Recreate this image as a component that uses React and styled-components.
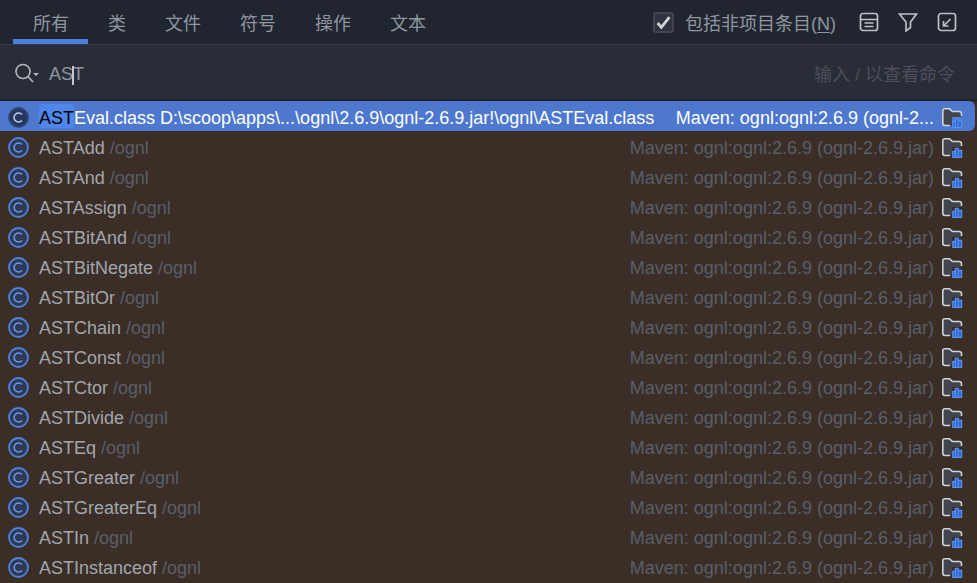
import React from "react";
import styled, { createGlobalStyle } from "styled-components";

const GlobalStyle = createGlobalStyle`
  html, body {
    margin: 0;
    padding: 0;
    background: #3b2e27;
  }
  body {
    font-family: "Liberation Sans", "Noto Sans CJK SC", sans-serif;
  }
`;

const Page = styled.div`
  width: 977px;
  height: 583px;
  overflow: hidden;
  display: flex;
  flex-direction: column;
  background: #3b2e27;
`;

const TopBar = styled.div`
  height: 44px;
  flex: none;
  display: flex;
  align-items: stretch;
  justify-content: space-between;
  background: #21252f;
  border-bottom: 1px solid #343843;
  padding-left: 13px;
  padding-right: 20px;
`;

const Tabs = styled.div`
  display: flex;
`;

const Tab = styled.div`
  box-sizing: border-box;
  padding: 9px 19px 0 20px;
  text-align: center;
  font-family: "Noto Sans CJK SC", sans-serif;
  font-size: 18px;
  line-height: 26px;
  color: #8f96a1;
  border-bottom: 5px solid ${(props) => (props.$active ? "#4f7fdc" : "transparent")};
`;

const Tools = styled.div`
  display: flex;
  align-items: center;
`;

const CheckBox = styled.span`
  width: 21px;
  height: 21px;
  box-sizing: border-box;
  border: 2px solid #3f4552;
  border-radius: 3px;
  background: #2e333e;
  display: flex;
  align-items: center;
  justify-content: center;
  margin-right: 11px;
`;

const CheckLabel = styled.span`
  font-family: "Liberation Sans", "Noto Sans CJK SC", sans-serif;
  font-size: 18px;
  color: #8f96a1;
  margin-right: 23px;
  white-space: nowrap;

  u {
    text-underline-offset: 2px;
  }
`;

const ToolIcon = styled.svg`
  width: 20px;
  height: 20px;
  margin-left: ${(props) => props.$gap || 0}px;
  fill: none;
  stroke: #bcc0c7;
  stroke-width: 1.7;
`;

const SearchBar = styled.div`
  height: 56px;
  flex: none;
  box-sizing: border-box;
  display: flex;
  align-items: center;
  background: #292d37;
  border-bottom: 2px solid #1f222b;
  padding: 2px 22px 0 15px;
`;

const SearchIcon = styled.svg`
  width: 24px;
  height: 20px;
  flex: none;
  margin-right: 10px;
  fill: none;
  stroke: #b6bac1;
  stroke-width: 1.6;
`;

const Query = styled.div`
  position: relative;
  flex: 1;
  padding-top: 2px;
  font-size: 18px;
  line-height: 24px;
  color: #8f96a1;
`;

const Caret = styled.span`
  position: absolute;
  left: 23px;
  top: 6px;
  width: 2px;
  height: 19px;
  background: #c4c8ce;
`;

const Hint = styled.div`
  font-family: "Liberation Sans", "Noto Sans CJK SC", sans-serif;
  font-size: 18px;
  color: #4b505b;
`;

const List = styled.div`
  display: flex;
  flex-direction: column;
`;

const Row = styled.div`
  height: 30px;
  flex: none;
  box-sizing: border-box;
  display: flex;
  align-items: center;
  padding: 4px 12px 0 8px;
  margin-right: 2px;
  border-radius: ${(props) => (props.$selected ? "0 6px 6px 0" : "0")};
  background: ${(props) => (props.$selected ? "#4e78ce" : "transparent")};
  font-size: 18px;
  line-height: 24px;
  white-space: nowrap;
`;

const ClassIcon = styled.svg`
  width: 21px;
  height: 21px;
  flex: none;
  margin-right: 10px;
  margin-bottom: 1px;
`;

const Name = styled.span`
  position: relative;
  z-index: 0;
  color: ${(props) => (props.$selected ? "#ffffff" : "#a2a6ac")};
`;

const Match = styled.span`
  position: relative;
  color: #000000;

  &::before {
    content: "";
    position: absolute;
    inset: -4px 0 0;
    z-index: -1;
    background: #4f86ec;
    border-radius: 3px;
  }
`;

const Path = styled.span`
  margin-left: 5px;
  color: ${(props) => (props.$selected ? "#ffffff" : "#5a5e67")};
`;

const Library = styled.span`
  margin-left: auto;
  color: ${(props) => (props.$selected ? "#ffffff" : "#5a5e67")};
`;

const FolderIcon = styled.svg`
  width: 21px;
  height: 20px;
  flex: none;
  margin-left: 8px;
  margin-bottom: 1px;
`;

const names = [
  "ASTAdd",
  "ASTAnd",
  "ASTAssign",
  "ASTBitAnd",
  "ASTBitNegate",
  "ASTBitOr",
  "ASTChain",
  "ASTConst",
  "ASTCtor",
  "ASTDivide",
  "ASTEq",
  "ASTGreater",
  "ASTGreaterEq",
  "ASTIn",
  "ASTInstanceof",
];

function CIcon({ selected }) {
  return (
    <ClassIcon viewBox="0 0 21 21">
      <circle
        cx="10.500"
        cy="10.500"
        r="9.500"
        fill={selected ? "#26375e" : "#2f3a52"}
        stroke={selected ? "#2f4677" : "#4f82e0"}
        strokeWidth="1.800"
      />
      <path
        d="M14 7.600a4.500 4.500 0 1 0 0 5.800"
        fill="none"
        stroke={selected ? "#b9c9ee" : "#6396f0"}
        strokeWidth="1.600"
      />
    </ClassIcon>
  );
}

function Folder() {
  return (
    <FolderIcon viewBox="0 0 21 20">
      <path
        d="M.8 3A2.200 2.200 0 0 1 3 .8h4.500l3 2.700h6.800a2.200 2.200 0 0 1 2.200 2.200V9H10v8.500H3A2.200 2.200 0 0 1 .8 15.300Z"
        fill="#41444c"
      />
      <path
        d="M8 17.500H3A2.200 2.200 0 0 1 .8 15.300V3A2.200 2.200 0 0 1 3 .8h4.500l3 2.700h6.800a2.200 2.200 0 0 1 2.200 2.200V8"
        fill="none"
        stroke="#d0d3d8"
        strokeWidth="1.600"
      />
      <path
        d="M10.800 19.300v-5.800h2.600v5.800ZM13.400 19.300v-9h2.800v9ZM16.200 19.300v-6.800h3.400v6.800Z"
        fill="#2f62c4"
        stroke="#5590f5"
        strokeWidth="1.300"
        strokeLinejoin="round"
      />
    </FolderIcon>
  );
}

export default function App() {
  return (
    <Page>
      <GlobalStyle />
      <TopBar>
        <Tabs>
          <Tab $active>所有</Tab>
          <Tab>类</Tab>
          <Tab>文件</Tab>
          <Tab>符号</Tab>
          <Tab>操作</Tab>
          <Tab>文本</Tab>
        </Tabs>
        <Tools>
          <CheckBox>
            <svg width="15" height="15" viewBox="0 0 14 14">
              <path d="M1.500 7.500l3.500 4L12.500 2" fill="none" stroke="#d0d3d8" strokeWidth="2.600" />
            </svg>
          </CheckBox>
          <CheckLabel>
            包括非项目条目(<u>N</u>)
          </CheckLabel>
          <ToolIcon viewBox="0 0 20 20">
            <rect x="1.500" y="1.500" width="17" height="17" rx="2.500" />
            <path d="M1.500 7.500h17M5.500 11h9M5.500 14.500h9" />
          </ToolIcon>
          <ToolIcon viewBox="0 0 20 20" $gap={19}>
            <path d="M1.500 2h17l-6 8v5.500L8 19V10Z" />
          </ToolIcon>
          <ToolIcon viewBox="0 0 20 20" $gap={19}>
            <rect x="1.500" y="1.500" width="17" height="17" rx="2.500" />
            <path d="M13.500 7l-7 7M6.500 9v5h5" />
          </ToolIcon>
        </Tools>
      </TopBar>
      <SearchBar>
        <SearchIcon viewBox="0 0 24 20">
          <circle cx="8" cy="8.500" r="7" />
          <path d="M13 13.500l5 5.500" />
          <path d="M18 10h6l-3 3Z" fill="#b6bac1" stroke="none" />
        </SearchIcon>
        <Query>
          AST
          <Caret />
        </Query>
        <Hint>输入 / 以查看命令</Hint>
      </SearchBar>
      <List>
        <Row $selected>
          <CIcon selected />
          <Name $selected>
            <Match>AST</Match>Eval.class
          </Name>
          <Path $selected>D:\scoop\apps\...\ognl\2.6.9\ognl-2.6.9.jar!\ognl\ASTEval.class</Path>
          <Library $selected>Maven: ognl:ognl:2.6.9 (ognl-2...</Library>
          <Folder />
        </Row>
        {names.map((name) => (
          <Row key={name}>
            <CIcon />
            <Name>{name}</Name>
            <Path>/ognl</Path>
            <Library>Maven: ognl:ognl:2.6.9 (ognl-2.6.9.jar)</Library>
            <Folder />
          </Row>
        ))}
      </List>
    </Page>
  );
}
